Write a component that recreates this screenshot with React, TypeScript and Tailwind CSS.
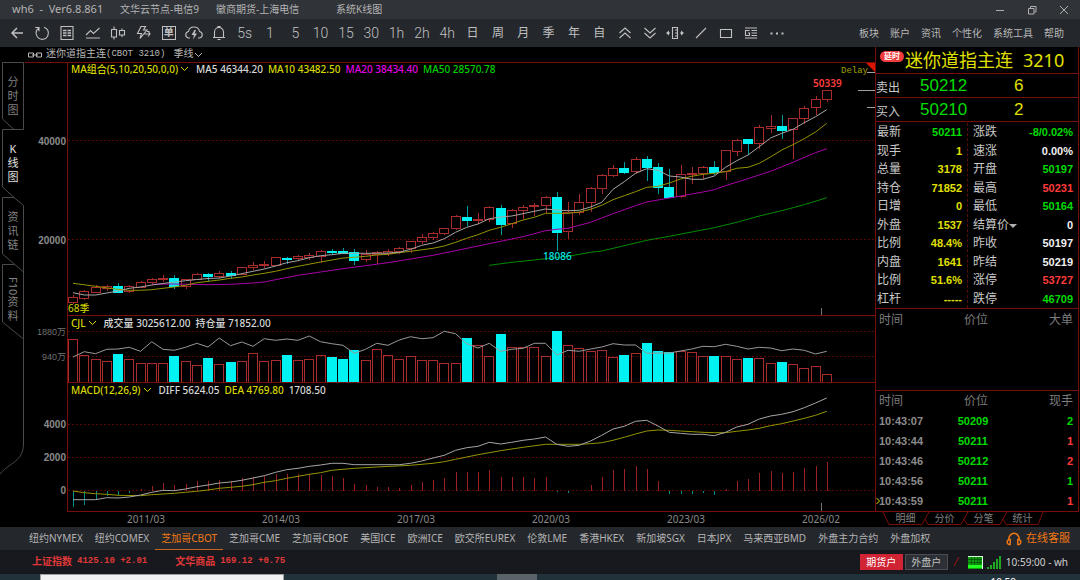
import React from "react";

const UI = "font-['Noto_Sans','Noto_Sans_CJK_SC',sans-serif]";
const ARIAL = "font-['Liberation_Sans','Noto_Sans_CJK_SC',sans-serif]";
const MONO = "font-['Liberation_Mono','Noto_Sans_CJK_SC',monospace]";

/* ---------- chart data ---------- */

type Point = [number, number];
/** kind (1 = up, 0 = down), body top, body bottom, high, low */
type Candle = [0 | 1, number, number, number, number];

const FIRST_X = 73;
const STEP = 11.25;
const xAt = (i: number) => FIRST_X + i * STEP;

const candles: Candle[] = [
  [1, 297, 302, 295, 303], [1, 291, 298, 290, 299], [1, 287, 292, 285, 292], [1, 286, 288, 285, 290],
  [0, 286, 292, 283, 292], [1, 286, 291, 285, 292], [1, 282, 287, 281, 287], [1, 279, 282, 278, 283],
  [1, 278, 279, 275, 281], [0, 278, 286, 275, 288], [1, 279, 286, 279, 288], [1, 274, 279, 273, 279],
  [0, 274, 276, 273, 280], [1, 273, 276, 271, 277], [0, 273, 275, 271, 278], [1, 267, 274, 267, 274],
  [1, 265, 267, 262, 269], [1, 264, 265, 261, 267], [1, 257, 265, 257, 265], [0, 258, 259, 257, 263],
  [1, 256, 258, 255, 259], [1, 255, 257, 253, 259], [1, 251, 256, 250, 262], [0, 251, 252, 249, 254],
  [0, 251, 253, 248, 253], [0, 252, 260, 249, 264], [1, 254, 259, 250, 261], [1, 252, 254, 251, 263],
  [1, 251, 253, 249, 255], [1, 248, 251, 247, 253], [1, 241, 248, 241, 252], [1, 237, 241, 234, 243],
  [1, 233, 237, 232, 239], [1, 228, 233, 228, 234], [1, 216, 228, 215, 229], [0, 217, 220, 206, 225],
  [1, 219, 220, 213, 223], [1, 207, 219, 206, 221], [0, 208, 224, 205, 234], [1, 210, 223, 209, 227],
  [1, 207, 210, 205, 218], [1, 205, 206, 203, 215], [1, 197, 205, 196, 212], [0, 197, 232, 192, 250],
  [1, 212, 231, 202, 238], [1, 202, 212, 194, 214], [1, 188, 202, 187, 211], [1, 175, 188, 174, 193],
  [1, 168, 175, 165, 176], [0, 168, 172, 162, 173], [1, 159, 171, 157, 173], [0, 159, 167, 156, 180],
  [0, 167, 187, 163, 193], [0, 187, 197, 169, 197], [1, 174, 196, 165, 197], [1, 173, 174, 167, 183],
  [1, 167, 173, 166, 178], [0, 167, 172, 161, 174], [1, 150, 171, 150, 179], [1, 140, 151, 139, 155],
  [0, 139, 143, 139, 154], [1, 127, 143, 125, 148], [1, 126, 128, 115, 132], [0, 126, 130, 115, 138],
  [1, 118, 129, 118, 158], [1, 108, 118, 106, 123], [1, 99, 107, 96, 114], [1, 90, 99, 90, 101],
];

const seq = (ys: number[]): Point[] => ys.map((y, i) => [i, y]);

const ma5 = seq([
  292.7, 295, 295, 293, 291, 288.3, 287, 285, 283.5, 282, 280.7, 279.5, 278.5, 278, 276, 273.7, 271.3, 269, 266,
  262.7, 260.7, 257.7, 255.7, 254.7, 253.3, 253.3, 253.3, 253.3, 253, 252.3, 249.3, 245.3, 243, 238.7, 232.3, 227.3,
  224, 218.7, 217, 216, 213.7, 211.3, 209, 210, 210.7, 210.3, 207, 202.3, 189.3, 181.7, 173.3, 168.7, 170.3, 176,
  177, 179.3, 179.3, 176, 167.3, 160.7, 155, 146.7, 138, 133.3, 129.3, 122.7, 116.7, 109.7,
]);
const ma10: Point[] = [
  [0, 283.3], [2, 286.3], [4, 289.3], [5, 290.3], [6, 290.3], [7, 289.7], [8, 288.3], [9, 287], [10, 285.3],
  [11, 282.7], [13, 280], [14, 278.3], [15, 277], [16, 275], [17, 273.3], [18, 271.3], [19, 268.7], [20, 266.3],
  [22, 262], [24, 258], [25, 257.3], [26, 256.3], [27, 255], [28, 254.3], [29, 252.7], [30, 251.3], [32, 248.3],
  [33, 246], [34, 242.3], [35, 238.3], [36, 234.7], [37, 230.3], [38, 227.3], [39, 223.7], [40, 220], [41, 217.3],
  [42, 213.3], [44, 213.3], [45, 212], [46, 209.3], [47, 205.3], [48, 199.7], [49, 195.7], [50, 191.7], [51, 187.3],
  [52, 186.3], [53, 183], [54, 179], [55, 176.3], [56, 174.3], [57, 173.3], [58, 171.7], [59, 168.3], [60, 167.3],
  [61, 163.3], [62, 157], [63, 150], [64, 144.7], [65, 138.7], [66, 132], [67, 123.3],
];
const ma20: Point[] = [
  [7, 284.3], [9, 284], [12, 284.7], [14, 284.3], [16, 283], [17, 282], [18, 279.7], [20, 275.3], [22, 272],
  [24, 268.7], [26, 265.7], [28, 262.7], [30, 259], [32, 255.3], [34, 250.7], [36, 246], [38, 241.3], [40, 236.7],
  [42, 230.7], [43, 229.3], [44, 228.3], [45, 225.3], [46, 222.3], [47, 218], [48, 213.7], [49, 209.7], [50, 205.7],
  [51, 202], [52, 200], [54, 196], [56, 192], [57, 189.7], [58, 185.7], [60, 178.7], [62, 171.3], [64, 162.3],
  [66, 152.7], [67, 148.7],
];
const ma50: Point[] = [
  [37, 265.3], [39, 262.3], [41, 260], [42, 258.7], [44, 256.3], [46, 252.3], [47, 251], [49, 245.7], [51, 240.3],
  [53, 236.3], [55, 232], [57, 227.7], [59, 222.3], [61, 216], [63, 210.7], [65, 204.7], [67, 197.7],
];

const volumeTops = [
  339, 355, 359, 361, 354, 359, 363, 363, 363, 356, 361, 365, 358, 364, 362, 361, 353, 361, 360, 355, 360, 359, 355,
  357, 359, 350, 360, 349, 355, 359, 356, 360, 360, 363, 363, 338, 345, 356, 334, 347, 347, 347, 356, 331, 345, 348,
  351, 350, 357, 355, 353, 343, 351, 352, 351, 352, 356, 356, 356, 359, 358, 358, 363, 362, 364, 368, 366, 374,
];
const openInterest = seq([
  357, 351.7, 353.7, 349.3, 349, 347.3, 351.3, 341.7, 349.3, 350.3, 347.3, 343.3, 347, 338, 345.7, 342, 346.3, 338.7,
  340.3, 339, 340.3, 336, 341.7, 343.7, 345.3, 353.3, 349.3, 343.3, 345.3, 340, 336.7, 338.7, 337.7, 331.3, 333.7,
  343.7, 348, 343.3, 351.3, 349.3, 348.3, 343.3, 343.3, 355, 350.3, 351.3, 349, 347, 343.7, 345, 345, 353.3, 353, 353,
  351, 349, 346.3, 346.7, 344.3, 346.3, 349, 347.3, 348, 350.7, 349, 350.3, 354, 351.3,
]);

const histogram = [
  507, 505, 500, 496, 495, 493, 489, 486, 483, 485, 484, 481, 481, 480, 481, 478, 477, 476, 474, 474, 474, 474, 475,
  476, 478, 484, 485, 487, 487, 488, 485, 482, 480, 478, 472, 472, 472, 470, 477, 477, 477, 478, 477, 492, 493, 491,
  485, 477, 470, 469, 466, 469, 481, 494, 494, 494, 493, 495, 489, 481, 479, 473, 471, 473, 472, 468, 466, 462,
];
const diff: Point[] = [
  [0, 499.7], [2, 499.7], [3, 497.7], [4, 498], [5, 497], [6, 495], [7, 492.3], [8, 490.3], [9, 490.7], [10, 489],
  [11, 486.7], [12, 485], [13, 483], [14, 482], [15, 480.3], [16, 478], [17, 475.7], [18, 472.3], [19, 469.7],
  [20, 468.3], [21, 466.3], [22, 465], [23, 463.3], [24, 463.3], [25, 464.7], [29, 464.7], [30, 463.3], [31, 461],
  [32, 458], [33, 455.3], [34, 450.3], [35, 447.7], [36, 446.3], [37, 442.3], [38, 444], [39, 442.3], [40, 440.3],
  [41, 439], [42, 437], [43, 444.3], [44, 446.3], [45, 445.3], [46, 441], [47, 435.3], [48, 429], [49, 426.3],
  [50, 421.3], [51, 420.3], [52, 426], [53, 432.3], [54, 433.3], [55, 434.3], [56, 434.3], [57, 435.7], [58, 432.3],
  [59, 427], [60, 424.3], [61, 419], [62, 416], [63, 414.3], [64, 411.7], [65, 407.7], [66, 403], [67, 398],
];
const dea: Point[] = [
  [0, 491], [1, 492.7], [2, 493.7], [3, 494.3], [4, 495.3], [6, 495.7], [7, 494.7], [8, 494], [9, 493.3], [10, 492.3],
  [11, 491.3], [12, 490], [13, 488.3], [14, 487.3], [15, 486.3], [16, 484.7], [17, 482.3], [18, 480.7], [19, 478.3],
  [20, 476.3], [21, 474.3], [22, 472.7], [23, 470.3], [24, 469.3], [25, 468.3], [27, 467], [30, 465.3], [32, 463.3],
  [33, 461.7], [34, 459.3], [36, 454.7], [38, 450.7], [40, 447.3], [42, 444.3], [45, 444.3], [46, 443.7], [47, 442.7],
  [48, 440.3], [49, 437.3], [50, 434], [51, 431], [52, 430], [53, 430.3], [54, 431], [56, 432.3], [57, 432.7],
  [58, 432.7], [59, 431.3], [60, 430], [61, 428.3], [62, 425.7], [63, 423.7], [64, 421], [65, 418.3], [66, 415.3],
  [67, 411.3],
];

const RED = "#a82c2c";
const CYAN = "#00f2f2";
const FRAME = "#780e0a";

function Curve({ points, color }: { points: Point[]; color: string }) {
  return (
    <polyline points={points.map(([i, y]) => `${xAt(i)},${y}`).join(" ")} fill="none" stroke={color} strokeWidth="1" />
  );
}

function GridLine({ y }: { y: number }) {
  return <line x1="68" x2="875" y1={y} y2={y} stroke="#5a0505" strokeDasharray="2 2" shapeRendering="crispEdges" />;
}

function AxisLabel({ y, children, bold = true }: { y: number; children: string; bold?: boolean }) {
  return (
    <text
      x="66"
      y={y}
      textAnchor="end"
      fill={bold ? "#8a8a8a" : "#707070"}
      className={
        bold
          ? "font-['Liberation_Sans',sans-serif] text-[10px] font-bold"
          : "font-['Liberation_Sans','Noto_Sans_CJK_SC',sans-serif] text-[9px]"
      }
    >
      {children}
    </text>
  );
}

function PricePanel() {
  return (
    <svg viewBox="24 62 851 254" className="block w-full" role="img" aria-label="K线图">
      <GridLine y={140.5} />
      <GridLine y={239.5} />
      <AxisLabel y={145}>40000</AxisLabel>
      <AxisLabel y={244}>20000</AxisLabel>
      <g shapeRendering="crispEdges">
        {candles.map(([up, top, bottom, high, low], i) => {
          const x = Math.round(xAt(i));
          return up ? (
            <g key={i} stroke={RED} fill="none">
              <line x1={x + 0.5} x2={x + 0.5} y1={high} y2={top} />
              <line x1={x + 0.5} x2={x + 0.5} y1={bottom + 1} y2={low + 1} />
              <rect x={x - 4.5} y={top + 0.5} width="9" height={bottom - top} />
            </g>
          ) : (
            <g key={i}>
              <line x1={x + 0.5} x2={x + 0.5} y1={high} y2={low + 1} stroke="#009c9c" />
              <rect x={x - 5} y={top} width="10" height={bottom - top + 1} fill={CYAN} />
            </g>
          );
        })}
      </g>
      <Curve points={ma50} color="#008c00" />
      <Curve points={ma20} color="#a800a8" />
      <Curve points={ma10} color="#949400" />
      <Curve points={ma5} color="#a6a6a6" />
      <text x="813" y="87" fill="#ff3c3c" className="font-['Noto_Sans',sans-serif] text-[10px] font-semibold">
        50339
      </text>
      <text x="543" y="260" fill="#00e4e4" className="font-['Noto_Sans',sans-serif] text-[10px] font-medium">
        18086
      </text>
      <text x="841" y="73" fill="#a0a000" className="font-['Liberation_Mono',monospace] text-[9px]">
        Delay
      </text>
      <text x="68" y="312" fill="#d8d800" className="font-['Noto_Sans','Noto_Sans_CJK_SC',sans-serif] text-[10px]">
        68季
      </text>
      <path d="M866 63H875V72Z" fill="#d81400" />
      <g stroke="#a0a0a0" shapeRendering="crispEdges">
        <line x1="867" x2="875" y1="72.5" y2="72.5" />
        <line x1="858" x2="875" y1="90.5" y2="90.5" />
        <line x1="867" x2="875" y1="107.5" y2="107.5" />
        <line x1="821.5" x2="821.5" y1="308" y2="315" stroke="#707070" />
      </g>
      <path d="M25 62.5H875M67.5 62V316M67 315.5H875" stroke={FRAME} fill="none" shapeRendering="crispEdges" />
    </svg>
  );
}

function VolumePanel() {
  return (
    <svg viewBox="24 316 851 67" className="block w-full" role="img" aria-label="成交量">
      <GridLine y={331.5} />
      <GridLine y={356.5} />
      <AxisLabel y={335} bold={false}>1880万</AxisLabel>
      <AxisLabel y={360} bold={false}>940万</AxisLabel>
      <g shapeRendering="crispEdges">
        {volumeTops.map((top, i) => {
          const x = Math.round(xAt(i));
          return candles[i][0] ? (
            <rect key={i} x={x - 4.5} y={top + 0.5} width="9" height={382 - top} stroke={RED} fill="none" />
          ) : (
            <rect key={i} x={x - 5} y={top} width="10" height={382 - top} fill={CYAN} />
          );
        })}
      </g>
      <Curve points={openInterest} color="#989898" />
      <path d="M67.5 316V383M67 382.5H875" stroke={FRAME} fill="none" shapeRendering="crispEdges" />
    </svg>
  );
}

const dates: [number, string][] = [
  [146, "2011/03"], [281, "2014/03"], [416, "2017/03"], [551, "2020/03"], [686, "2023/03"], [821, "2026/02"],
];

function MacdPanel() {
  return (
    <svg viewBox="24 383 851 144" className="block w-full" role="img" aria-label="MACD">
      <GridLine y={424.5} />
      <GridLine y={457.5} />
      <GridLine y={490.5} />
      <AxisLabel y={428}>4000</AxisLabel>
      <AxisLabel y={461}>2000</AxisLabel>
      <AxisLabel y={494}>0</AxisLabel>
      <g shapeRendering="crispEdges">
        {histogram.map((y, i) => {
          const x = Math.round(xAt(i)) + 0.5;
          return <line key={i} x1={x} x2={x} y1={490.5} y2={y} stroke={y > 490 ? "#008c8c" : "#9c2020"} />;
        })}
      </g>
      <Curve points={dea} color="#949400" />
      <Curve points={diff} color="#a6a6a6" />
      <line x1="821.5" x2="821.5" y1="503" y2="511" stroke="#707070" shapeRendering="crispEdges" />
      <path d="M67.5 383V512M67 511.5H875" stroke={FRAME} fill="none" shapeRendering="crispEdges" />
      {dates.map(([x, label]) => (
        <text
          key={label}
          x={x}
          y="523"
          textAnchor="middle"
          fill="#8a8a8a"
          className="font-['Noto_Sans',sans-serif] text-[10px]"
        >
          {label}
        </text>
      ))}
    </svg>
  );
}

function Chevron() {
  return (
    <svg viewBox="0 0 9 6" className="h-[6px] w-[9px]" fill="none" stroke="currentColor" aria-hidden="true">
      <path d="M1 1L4.500 4.500L8 1" />
    </svg>
  );
}

function Legend({ name, items }: { name: string; items: [string, string][] }) {
  return (
    <div
      className={`absolute left-[47px] top-0 flex h-[14px] items-center gap-[5px] whitespace-nowrap text-[10px] font-medium leading-[14px] ${UI}`}
    >
      <button type="button" className="flex items-center gap-[2px] pr-[2px] text-[#d8d800]">
        {name}
        <Chevron />
      </button>
      {items.map(([text, color]) => (
        <span key={text} className={color}>
          {text}
        </span>
      ))}
    </div>
  );
}

/* ---------- title bar and toolbar ---------- */

function TitleBar() {
  return (
    <header className="flex h-[19px] items-center bg-[#303338] pl-3 text-[10px] text-[#b4b4b4]">
      <div className="flex grow items-center whitespace-pre">
        <span className="w-[108px] text-[11px]">wh6  -  Ver6.8.861</span>
        <span className="w-24">文华云节点-电信9</span>
        <span className="w-[120px]">徽商期货-上海电信</span>
        <span>系统K线图</span>
      </div>
      <div className="flex text-[#b0b0b0]">
        <button type="button" aria-label="最小化" className="flex w-8 justify-center">
          <svg viewBox="0 0 10 10" className="size-[10px]" stroke="currentColor"><path d="M1 5.500H9" /></svg>
        </button>
        <button type="button" aria-label="还原" className="flex w-8 justify-center">
          <svg viewBox="0 0 10 10" className="size-[10px]" fill="none" stroke="currentColor">
            <path d="M1.500 3.500H7V9H1.500ZM3.500 3V1.500H9V7H7.500" />
          </svg>
        </button>
        <button type="button" aria-label="关闭" className="flex w-8 justify-center">
          <svg viewBox="0 0 10 10" className="size-[10px]" stroke="currentColor"><path d="M1 1L9 9M9 1L1 9" /></svg>
        </button>
      </div>
    </header>
  );
}

function Glyph({ children, wide = false }: { children: React.ReactNode; wide?: boolean }) {
  return (
    <svg
      viewBox={wide ? "0 0 20 16" : "0 0 16 16"}
      className={wide ? "h-4 w-5" : "size-4"}
      fill="none"
      stroke="currentColor"
      strokeWidth="1.1"
      aria-hidden="true"
    >
      {children}
    </svg>
  );
}

const tools: { label: string; icon?: React.ReactNode }[] = [
  { label: "返回", icon: <Glyph><path d="M14 8H3M8 3L3 8L8 13" strokeWidth="1.5" /></Glyph> },
  { label: "刷新", icon: <Glyph><path d="M10 2.200A6.200 6.200 0 1 1 4.800 3M1.200 2.500H5V6.300" /></Glyph> },
  {
    label: "报价",
    icon: (
      <Glyph>
        <path d="M2 1.500H14V14.500H2Z" />
        <path d="M4 5.500H7.500M8.500 5.500H12M4 8H7.500M8.500 8H12M4 10.500H7.500M8.500 10.500H12" strokeWidth="1.400" />
      </Glyph>
    ),
  },
  { label: "分时", icon: <Glyph><path d="M1 10L5.500 5.500L8.500 8.500L14.500 3M1 13H15" /></Glyph> },
  {
    label: "K线",
    icon: <Glyph><path d="M1.500 4.500H6.500V12H1.500ZM4 1.500V4.500M4 12V14.500M9.500 5.500H14.500V10H9.500ZM12 3.500V5.500M12 10V12" /></Glyph>,
  },
  {
    label: "闪电下单",
    icon: <Glyph><path d="M6 1.500H10.500L8.500 5H12L5 13.500L6.500 8.500H2.500ZM9.500 9H15M12 6.500H14.500M13 11.500L15 9L13.500 6.500" /></Glyph>,
  },
  {
    label: "单",
    icon: (
      <span className="flex h-[14px] w-[14px] items-center justify-center border border-current text-[10px] font-bold leading-none">
        单
      </span>
    ),
  },
  {
    label: "云端",
    icon: (
      <Glyph wide>
        <path d="M6 13H4.500A3.300 3.300 0 0 1 4.500 6.500C5 3.500 7.500 2 10 2S15 3.500 15.500 6.500A3.300 3.300 0 0 1 15.500 13H14" />
        <path d="M10.500 5L7.500 10H10L9 14.500L13 8.500H10.500L12 5Z" fill="currentColor" stroke="none" />
      </Glyph>
    ),
  },
  { label: "提醒", icon: <Glyph><path d="M2 12.500H14M3.500 12.500V7A4.500 4.500 0 0 1 12.500 7V12.500M7 2.500V1.500H9V2.500M6.500 14.500H9.500" /></Glyph> },
  { label: "5s" }, { label: "1" }, { label: "5" }, { label: "10" }, { label: "15" }, { label: "30" }, { label: "1h" },
  { label: "2h" }, { label: "4h" }, { label: "日" }, { label: "周" }, { label: "月" }, { label: "季" }, { label: "年" },
  { label: "自" },
  { label: "放大", icon: <Glyph><path d="M2.500 8L8 3L13.500 8M2.500 13L8 8L13.500 13" /></Glyph> },
  { label: "缩小", icon: <Glyph><path d="M2.500 3L8 8L13.500 3M2.500 8L8 13L13.500 8" /></Glyph> },
  {
    label: "区间",
    icon: (
      <Glyph wide>
        <path d="M7.500 2.500H12.500V13.500H7.500ZM10 5H12M10 8H12M10 11H12M2 8H5M15 8H18" />
        <path d="M1 8L4 5.500V10.500ZM19 8L16 5.500V10.500Z" fill="currentColor" stroke="none" />
      </Glyph>
    ),
  },
  { label: "画线", icon: <Glyph><path d="M3 13L13 3" /></Glyph> },
  { label: "矩形", icon: <Glyph><path d="M2.500 4.500H13.500V12.500H2.500Z" /></Glyph> },
  {
    label: "公式",
    icon: <Glyph><path d="M2 3H14M8.500 5.500H14M8.500 8H14M8.500 10.500H14M2 13H14M6.500 5.500H2.500V10.500H6.500V8H5" /></Glyph>,
  },
  {
    label: "更多",
    icon: <Glyph><path d="M1.500 8.500H3.500M7 8.500H9M12.500 8.500H14.500" strokeWidth="2" /></Glyph>,
  },
];

function Toolbar() {
  return (
    <nav className="flex h-7 items-center justify-between bg-[#24272c] pl-1 pr-4">
      <div className="flex max-w-[785px] grow font-['Roboto','Noto_Sans_CJK_SC',sans-serif] text-[14px] font-light text-[#c0c0c0]">
        {tools.map((tool) => (
          <button
            key={tool.label}
            type="button"
            aria-label={tool.label}
            className="flex h-7 min-w-0 flex-1 items-center justify-center"
          >
            {tool.icon ?? (
              <span className={tool.label.charCodeAt(0) > 255 ? "text-[12px] font-normal" : ""}>{tool.label}</span>
            )}
          </button>
        ))}
      </div>
      <div className="flex gap-[11px] text-[10px] text-[#b8b8b8]">
        {["板块", "账户", "资讯", "个性化", "系统工具", "帮助"].map((item) => (
          <button key={item} type="button" className="whitespace-nowrap">
            {item}
          </button>
        ))}
      </div>
    </nav>
  );
}

/* ---------- left tabs ---------- */

function SideTabs() {
  return (
    <aside className="relative w-6 shrink-0 pt-[15px] text-[11px] leading-[14px] text-[#808080]">
      <svg
        viewBox="0 47 24 480"
        className="absolute left-0 top-0 h-[480px] w-6"
        fill="none"
        stroke="#4a4a4a"
        aria-hidden="true"
      >
        <path d="M2.500 62.500H23.500V129.500H2.500V187L14 197.500L23.500 205.500V444C23 462 10 462 0 474M2.500 62.500V119L14 129.500M14 197.500H2.500V254L23.500 272M14 264.500H2.500V322L23.500 339" />
      </svg>
      <div className="relative flex flex-col">
        <button type="button" className="flex h-[67px] flex-col items-center pl-[2px] pt-[13px]">
          <span>分</span><span>时</span><span>图</span>
        </button>
        <button type="button" className="flex h-[68px] flex-col items-center pl-[2px] pt-[13px] text-[#e0e0e0]">
          <span>K</span><span>线</span><span>图</span>
        </button>
        <button type="button" className="flex h-[67px] flex-col items-center pl-[2px] pt-[13px]">
          <span>资</span><span>讯</span><span>链</span>
        </button>
        <button type="button" className="flex h-[75px] flex-col items-center pl-[2px] pt-[13px]">
          <span className="[writing-mode:vertical-rl]">F10</span><span>资</span><span>料</span>
        </button>
      </div>
    </aside>
  );
}

/* ---------- quote panel ---------- */

const Y = "text-[#e0e000]";
const G = "text-[#00dc00]";
const R = "text-[#ff3b3b]";
const W = "text-[#f0f0f0]";

const quoteLeft: [string, string, string][] = [
  ["最新", "50211", G], ["现手", "1", Y], ["总量", "3178", Y], ["持仓", "71852", Y], ["日增", "0", Y],
  ["外盘", "1537", Y], ["比例", "48.4%", Y], ["内盘", "1641", Y], ["比例", "51.6%", Y], ["杠杆", "-----", Y],
];
const quoteRight: [string, string, string][] = [
  ["涨跌", "-8/0.02%", G], ["速涨", "0.00%", W], ["开盘", "50197", G], ["最高", "50231", R], ["最低", "50164", G],
  ["结算价", "0", W], ["昨收", "50197", W], ["昨结", "50219", W], ["涨停", "53727", R], ["跌停", "46709", G],
];

function QuoteColumn({ rows, className }: { rows: [string, string, string][]; className: string }) {
  return (
    <dl className={`flex flex-col ${className}`}>
      {rows.map(([label, value, color], i) => (
        <div key={i} className="flex flex-1 items-center justify-between">
          <dt className="flex items-center text-[12px] leading-[18px] text-[#c8c8c8]">
            {label}
            {label === "结算价" && (
              <svg viewBox="0 0 8 5" className="mt-[3px] h-[5px] w-2" fill="#b0b0b0" aria-hidden="true">
                <path d="M0 0H8L4 4Z" />
              </svg>
            )}
          </dt>
          <dd className={`text-[11px] font-bold leading-[18px] ${ARIAL} ${color}`}>{value}</dd>
        </div>
      ))}
    </dl>
  );
}

function OfferRow({ label, price, size }: { label: string; price: string; size: string }) {
  return (
    <div className="flex h-6 items-center border-b border-[#780e0a]">
      <span className="w-11 pt-1 text-[12px] leading-5 text-[#c8c8c8]">{label}</span>
      <span className={`w-[94px] text-[17px] leading-6 ${ARIAL} ${G}`}>{price}</span>
      <span className={`text-[17px] leading-6 ${ARIAL} ${Y}`}>{size}</span>
    </div>
  );
}

const ticks: [string, string, string, string][] = [
  ["10:43:07", "50209", "2", G], ["10:43:44", "50211", "1", R], ["10:43:46", "50212", "2", R],
  ["10:43:56", "50211", "1", G], ["10:43:59", "50211", "1", R],
];

function TickHead({ last }: { last: string }) {
  return (
    <thead>
      <tr className="h-5 text-[12px] text-[#7c7c7c]">
        <th className="w-[34%] text-left font-normal">时间</th>
        <th className="w-[33%] pr-[2px] text-center font-normal">价位</th>
        <th className="w-[33%] text-right font-normal">{last}</th>
      </tr>
    </thead>
  );
}

function QuotePanel() {
  return (
    <section className="flex w-[205px] shrink-0 flex-col pr-px">
      <div className="border-x border-[#780e0a]">
        <div className="flex h-[27px] items-center border-b border-[#780e0a] pl-1">
          <span className="mb-2 flex h-[11px] w-6 items-center justify-center rounded-full bg-[#f03c3c] text-[8px] font-bold leading-none text-white">
            延时
          </span>
          <h1 className="ml-px whitespace-nowrap text-[18px] leading-[27px] text-[#e0e000]">
            迷你道指主连<span className="ml-[10px]">3210</span>
          </h1>
        </div>
        <OfferRow label="卖出" price="50212" size="6" />
        <OfferRow label="买入" price="50210" size="2" />
        <div className="flex h-[187px] border-b border-[#780e0a] pt-px">
          <QuoteColumn rows={quoteLeft} className="w-[92px] border-r border-dashed border-[#5a0c0c] pl-px pr-[5px]" />
          <QuoteColumn rows={quoteRight} className="grow pl-[5px] pr-[5px]" />
        </div>
        <div className="h-[82px] border-b border-[#780e0a] pl-[3px] pr-[5px] pt-px">
          <table className="w-full table-fixed">
            <TickHead last="大单" />
          </table>
        </div>
        <div className="relative border-b border-[#780e0a] pl-[3px] pr-[5px]">
          <table className="w-full table-fixed">
            <TickHead last="现手" />
            <tbody className={`text-[11px] font-bold ${ARIAL}`}>
              {ticks.map(([time, price, size, color]) => (
                <tr key={time} className="h-5">
                  <td className="text-[#8c8c8c]">{time}</td>
                  <td className={`pr-2 text-center ${G}`}>{price}</td>
                  <td className={`text-right ${color}`}>{size}</td>
                </tr>
              ))}
            </tbody>
          </table>
          <svg viewBox="0 0 4 8" className="absolute bottom-[6px] left-0 h-2 w-1" fill="none" stroke="#e0e000" aria-hidden="true">
            <path d="M0.500 1L3.500 4L0.500 7" />
          </svg>
        </div>
      </div>
      <div className="relative h-[15px]">
        <svg viewBox="0 0 204 15" className="absolute left-0 top-0 h-[15px] w-[204px]" fill="none" stroke="#780e0a" aria-hidden="true">
          <path d="M8 0L14 12.500H47L54 0M50 7L53 12.500H86L93 0M89 7L92 12.500H125L132 0M128 7L131 12.500H163L168 0" />
        </svg>
        <div className="relative flex pl-[11px] text-[10px] leading-[13px] text-[#808080]">
          {["明细", "分价", "分笔", "统计"].map((tab) => (
            <button key={tab} type="button" className="w-[39px]">
              {tab}
            </button>
          ))}
        </div>
      </div>
    </section>
  );
}

/* ---------- bottom bars ---------- */

const markets = [
  "纽约NYMEX", "纽约COMEX", "芝加哥CBOT", "芝加哥CME", "芝加哥CBOE", "美国ICE", "欧洲ICE", "欧交所EUREX", "伦敦LME",
  "香港HKEX", "新加坡SGX", "日本JPX", "马来西亚BMD", "外盘主力合约", "外盘加权",
];

function MarketTabs() {
  return (
    <nav className="flex h-[23px] items-stretch justify-between bg-[#24272c] pl-[23px] pr-[10px] text-[10px] text-[#b4b4b4]">
      <div className="flex">
        {markets.map((m) => (
          <a
            key={m}
            href="#"
            className={
              m === "芝加哥CBOT"
                ? "flex items-center whitespace-nowrap border-b border-[#c8641e] px-[6px] text-[#f07814]"
                : "flex items-center whitespace-nowrap border-b border-transparent px-[6px]"
            }
          >
            {m}
          </a>
        ))}
      </div>
      <a href="#" className="flex items-center gap-[3px] whitespace-nowrap text-[11px] text-[#f07814]">
        <svg viewBox="0 0 18 14" className="h-[14px] w-[18px]" fill="none" stroke="currentColor" strokeWidth="1.500" aria-hidden="true">
          <path d="M3.500 8.500C3.500 4 6 1.200 9 1.200S14.500 4 14.500 8.500M5 7.500H4A2.600 2.600 0 0 0 4 12.500H5.200V7.500ZM13 7.500H14A2.600 2.600 0 0 1 14 12.500H12.800V7.500Z" />
        </svg>
        在线客服
      </a>
    </nav>
  );
}

function IndexQuote({ name, value }: { name: string; value: string }) {
  return (
    <span className="flex items-center gap-[5px]">
      <span className="text-[10px]">{name}</span>
      <span>{value}</span>
    </span>
  );
}

function StatusBar() {
  return (
    <footer className="flex h-6 items-center bg-[#18191e] pl-8 pr-3 text-[10px]">
      <div className={`flex grow gap-7 whitespace-nowrap text-[9px] font-bold text-[#e03838] ${MONO}`}>
        <IndexQuote name="上证指数" value="4125.10 +2.01" />
        <IndexQuote name="文华商品" value="169.12 +0.75" />
      </div>
      <div className="flex items-center">
        <button type="button" className="h-4 w-[43px] bg-[#d02434] leading-4 text-white">期货户</button>
        <button type="button" className="ml-[2px] h-4 w-[43px] border border-[#4a4e54] bg-[#2c3036] leading-[14px] text-[#c0c0c0]">
          外盘户
        </button>
        <svg viewBox="0 0 20 14" className="h-[14px] w-5" stroke="#a01414" aria-hidden="true"><path d="M6 11L11 2" /></svg>
        <svg viewBox="0 0 15 13" className="h-[13px] w-[15px]" aria-hidden="true">
          <path d="M0 0H15V13H0Z" fill="#d8ffd8" />
          <path d="M0 1H14V13H0Z" fill="#10a010" />
          <path d="M0 3.500H14M0 6.500H14M3.500 1V9M6.500 1V9M9.500 1V9M12 1V9" stroke="#066006" />
          <path d="M0 9H14V12H0Z" fill="#20ff20" />
        </svg>
        <svg viewBox="0 0 14 13" className="ml-1 h-[13px] w-[14px]" fill="#20a820" aria-hidden="true">
          <path d="M0 11H2V13H0ZM3 9H5V13H3ZM6 6H8V13H6ZM9 3H11V13H9ZM12 0H14V13H12Z" />
        </svg>
        <span className="ml-[5px] whitespace-nowrap text-[#d0d0d0]">10:59:00 - wh</span>
      </div>
    </footer>
  );
}

function Taskbar() {
  return (
    <div className="flex h-[6px] overflow-hidden bg-[#22323a] pl-10">
      <div className="w-[244px] border border-b-0 border-[#a0a0a0] bg-[#f2f2f2]" />
      <div className="ml-[213px] w-10 bg-[#5a6468]" />
      <span className="ml-auto pr-16 pt-[3px] text-[10px] leading-[10px] text-white">10:59</span>
    </div>
  );
}

export default function App() {
  return (
    <div className={`flex min-h-screen flex-col bg-black ${UI}`}>
      <TitleBar />
      <Toolbar />
      <main className="flex grow">
        <SideTabs />
        <section className="min-w-0 flex-1">
          <div className={`flex h-[15px] items-center pl-1 text-[#b8b8b8] ${MONO}`}>
            <svg viewBox="0 0 14 6" className="h-[6px] w-[14px]" fill="none" stroke="currentColor" aria-hidden="true">
              <path d="M0.500 1H5.500V5H0.500ZM8.500 1H13.500V5H8.500ZM4 3H10" />
            </svg>
            <h2 className="ml-1 flex items-center text-[10px]">
              迷你道指主连<span className="text-[9px]">(CBOT 3210)</span>
            </h2>
            <button type="button" className="ml-2 flex items-center gap-px text-[10px]">
              季线
              <Chevron />
            </button>
          </div>
          <div className="relative">
            <PricePanel />
            <Legend
              name="MA组合(5,10,20,50,0,0)"
              items={[
                ["MA5 46344.20", "text-[#d8d8d8]"],
                ["MA10 43482.50", "text-[#d8d800]"],
                ["MA20 38434.40", "text-[#e000e0]"],
                ["MA50 28570.78", "text-[#00d000]"],
              ]}
            />
          </div>
          <div className="relative">
            <VolumePanel />
            <Legend
              name="CJL"
              items={[
                ["成交量 3025612.00", "text-[#d8d8d8]"],
                ["持仓量 71852.00", "text-[#d8d8d8]"],
              ]}
            />
          </div>
          <div className="relative">
            <MacdPanel />
            <Legend
              name="MACD(12,26,9)"
              items={[
                ["DIFF 5624.05", "text-[#d8d8d8]"],
                ["DEA 4769.80", "text-[#d8d800]"],
                ["1708.50", "text-[#d8d8d8]"],
              ]}
            />
          </div>
        </section>
        <QuotePanel />
      </main>
      <MarketTabs />
      <StatusBar />
      <Taskbar />
    </div>
  );
}
